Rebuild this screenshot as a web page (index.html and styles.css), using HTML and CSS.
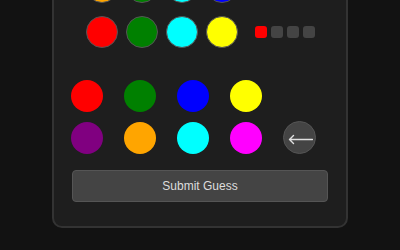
FILE: index.html
```html
<!DOCTYPE html>
<html lang="en">
<head>
<meta charset="utf-8">
<title>Mastermind</title>
<link rel="stylesheet" href="styles.css">
</head>
<body>
<main class="panel">
  <section class="history">
    <div class="guess-row">
      <div class="pegs-holes">
        <span class="peg-hole purple"></span><span class="peg-hole red"></span><span class="peg-hole green"></span><span class="peg-hole yellow"></span>
      </div>
      <div class="feedback"><span class="fb white"></span><span class="fb"></span><span class="fb"></span><span class="fb"></span></div>
    </div>
    <div class="guess-row">
      <div class="pegs-holes">
        <span class="peg-hole orange"></span><span class="peg-hole green"></span><span class="peg-hole cyan"></span><span class="peg-hole blue"></span>
      </div>
      <div class="feedback"><span class="fb red"></span><span class="fb white"></span><span class="fb"></span><span class="fb"></span></div>
    </div>
    <div class="guess-row">
      <div class="pegs-holes">
        <span class="peg-hole red"></span><span class="peg-hole green"></span><span class="peg-hole cyan"></span><span class="peg-hole yellow"></span>
      </div>
      <div class="feedback"><span class="fb red"></span><span class="fb"></span><span class="fb"></span><span class="fb"></span></div>
    </div>
  </section>
  <section class="palette">
    <button class="swatch red" aria-label="red"></button>
    <button class="swatch green" aria-label="green"></button>
    <button class="swatch blue" aria-label="blue"></button>
    <button class="swatch yellow" aria-label="yellow"></button>
    <span class="spacer"></span>
    <button class="swatch purple" aria-label="purple"></button>
    <button class="swatch orange" aria-label="orange"></button>
    <button class="swatch cyan" aria-label="cyan"></button>
    <button class="swatch magenta" aria-label="magenta"></button>
    <button class="backspace" aria-label="Backspace">
      <svg class="arrow" width="25" height="11" viewBox="0 0 25 11" aria-hidden="true">
        <path d="M1.5 5.5H24.5M5.5 1.5L1.5 5.5L5.5 9.5" fill="none" stroke="#e0e0e0" stroke-width="1.4" stroke-linecap="round" stroke-linejoin="round"/>
      </svg>
    </button>
  </section>
  <button class="submit">Submit Guess</button>
</main>
</body>
</html>
```

FILE: styles.css
```css
html, body {
  margin: 0;
  height: 100%;
}
body {
  background: #121212;
  display: flex;
  flex-direction: column;
  align-items: center;
  justify-content: flex-end;
  padding-bottom: 22px;
  box-sizing: border-box;
  overflow: hidden;
  font-family: "Liberation Sans", Arial, sans-serif;
}
.panel {
  flex-shrink: 0;
  width: 296px;
  box-sizing: border-box;
  background: #1e1e1e;
  border: 2px solid #333;
  border-radius: 10px;
  padding: 20px 18px 24px;
  display: flex;
  flex-direction: column;
}
.history {
  display: flex;
  flex-direction: column;
  gap: 13px;
}
.guess-row {
  display: flex;
  justify-content: center;
  align-items: center;
  gap: 17px;
  height: 32px;
}
.pegs-holes {
  display: flex;
  gap: 8px;
}
.peg-hole {
  width: 30px;
  height: 30px;
  border-radius: 50%;
  border: 1px solid #555;
  background: #333;
}
.feedback {
  display: flex;
  gap: 4px;
}
.fb {
  width: 12px;
  height: 12px;
  border-radius: 3px;
  background: #444;
}
.fb.red { background: #f00; }
.fb.white { background: #fff; }

.red { background: #f00; }
.green { background: #008000; }
.blue { background: #00f; }
.yellow { background: #ff0; }
.purple { background: #800080; }
.orange { background: #ffa500; }
.cyan { background: #0ff; }
.magenta { background: #f0f; }

.palette {
  margin-top: 32px;
  margin-left: -1px;
  display: grid;
  grid-template-columns: repeat(5, 32px);
  column-gap: 21px;
  row-gap: 9px;
  align-items: center;
}
.swatch {
  width: 32px;
  height: 32px;
  border-radius: 50%;
  border: none;
  padding: 0;
  margin: 0;
}
.swatch.red { background: #f00; }
.swatch.green { background: #008000; }
.swatch.blue { background: #00f; }
.swatch.yellow { background: #ff0; }
.swatch.purple { background: #800080; }
.swatch.orange { background: #ffa500; }
.swatch.cyan { background: #0ff; }
.swatch.magenta { background: #f0f; }
.backspace {
  width: 33px;
  height: 33px;
  border-radius: 50%;
  border: 1px solid #555;
  background: #444;
  padding: 4px 0 0 1px;
  margin: 0;
  box-sizing: border-box;
  display: flex;
  align-items: center;
  justify-content: center;
}
.arrow {
  display: block;
}
.submit {
  margin-top: 16px;
  height: 32px;
  border: 1px solid #555;
  border-radius: 4px;
  background: #444;
  color: #ddd;
  font-family: "Liberation Sans", Arial, sans-serif;
  font-size: 12px;
  padding: 0;
}
```
